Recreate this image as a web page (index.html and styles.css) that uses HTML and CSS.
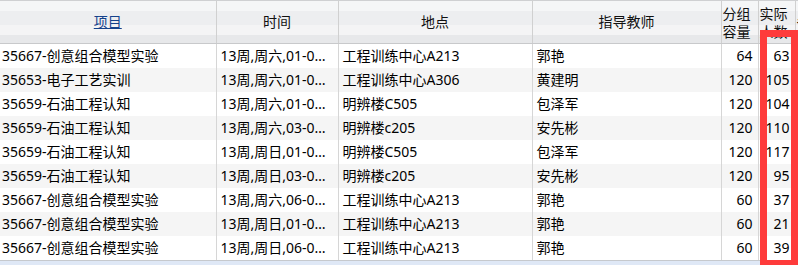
FILE: index.html
```html
<!DOCTYPE html>
<html>
<head>
<meta charset="utf-8">
<link rel="stylesheet" href="styles.css">
</head>
<body>
<div class="grid">
  <table class="tbl">
    <colgroup>
      <col class="c1"><col class="c2"><col class="c3"><col class="c4"><col class="c5"><col class="c6"><col class="c7">
    </colgroup>
    <thead>
      <tr>
        <th><a class="sort">项目</a></th>
        <th>时间</th>
        <th>地点</th>
        <th>指导教师</th>
        <th class="wrap">分组容量</th>
        <th class="wrap">实际人数</th>
        <th class="wrap">备注</th>
      </tr>
    </thead>
    <tbody>
      <tr><td class="first">35667-创意组合模型实验</td><td><div class="ell">13周,周六,01-02节</div></td><td>工程训练中心A213</td><td>郭艳</td><td class="num">64</td><td class="num">63</td><td></td></tr>
      <tr class="alt"><td class="first">35653-电子工艺实训</td><td><div class="ell">13周,周六,01-04节</div></td><td>工程训练中心A306</td><td>黄建明</td><td class="num">120</td><td class="num">105</td><td></td></tr>
      <tr><td class="first">35659-石油工程认知</td><td><div class="ell">13周,周六,01-02节</div></td><td>明辨楼C505</td><td>包泽军</td><td class="num">120</td><td class="num">104</td><td></td></tr>
      <tr class="alt"><td class="first">35659-石油工程认知</td><td><div class="ell">13周,周六,03-04节</div></td><td>明辨楼c205</td><td>安先彬</td><td class="num">120</td><td class="num">110</td><td></td></tr>
      <tr><td class="first">35659-石油工程认知</td><td><div class="ell">13周,周日,01-02节</div></td><td>明辨楼C505</td><td>包泽军</td><td class="num">120</td><td class="num">117</td><td></td></tr>
      <tr class="alt"><td class="first">35659-石油工程认知</td><td><div class="ell">13周,周日,03-04节</div></td><td>明辨楼c205</td><td>安先彬</td><td class="num">120</td><td class="num">95</td><td></td></tr>
      <tr><td class="first">35667-创意组合模型实验</td><td><div class="ell">13周,周六,06-08节</div></td><td>工程训练中心A213</td><td>郭艳</td><td class="num">60</td><td class="num">37</td><td></td></tr>
      <tr class="alt"><td class="first">35667-创意组合模型实验</td><td><div class="ell">13周,周日,01-02节</div></td><td>工程训练中心A213</td><td>郭艳</td><td class="num">60</td><td class="num">21</td><td></td></tr>
      <tr><td class="first">35667-创意组合模型实验</td><td><div class="ell">13周,周日,06-08节</div></td><td>工程训练中心A213</td><td>郭艳</td><td class="num">60</td><td class="num">39</td><td></td></tr>
    </tbody>
  </table>
  <div class="footer"></div>
  <div class="mark"></div>
</div>
</body>
</html>
```

FILE: styles.css
```css
html, body {
  margin: 0;
  padding: 0;
  background: #ffffff;
}
body {
  width: 798px;
  height: 265px;
  overflow: hidden;
  font-family: "Noto Sans", "Noto Sans CJK SC", sans-serif;
  font-size: 14px;
  color: #000;
}
.grid {
  position: relative;
  width: 798px;
  height: 265px;
  overflow: hidden;
  border-top: 1px solid #cfd0d2;
  box-sizing: border-box;
}
.tbl {
  table-layout: fixed;
  border-collapse: collapse;
  width: 830px;
}
.c1 { width: 216px; }
.c2 { width: 122px; }
.c3 { width: 194px; }
.c4 { width: 189px; }
.c5 { width: 37px; }
.c6 { width: 37px; }
.c7 { width: 35px; }

thead th {
  height: 40px;
  padding: 0;
  font-weight: normal;
  text-align: center;
  line-height: 18px;
  color: #111;
  border-left: 1px solid #d0d0d0;
  border-bottom: 1px solid #c8c9cb;
  background: linear-gradient(#f5f6f7 0, #f5f6f7 10px, #edeef0 10px, #edeef0 24px, #f4f4f5 24px, #f4f4f5 34px, #e7e8ea 34px, #e7e8ea 40px);
  white-space: nowrap;
  overflow: hidden;
}
thead th:first-child { border-left: none; }
thead th.wrap {
  white-space: normal;
  word-break: break-all;
  line-height: 18px;
  padding-top: 2px;
  text-align: left;
  padding-left: 1px;
}
.sort {
  color: #15428b;
  text-decoration: underline;
}
tbody td {
  height: 24px;
  padding: 0 4px;
  line-height: 24px;
  white-space: nowrap;
  overflow: hidden;
  border-left: 1px solid #d6d6d6;
}
tbody td:first-child { border-left: none; }
tbody td.first { padding-left: 2px; }
tbody tr.alt td { background: #f5f5f5; }
tbody td.num {
  text-align: right;
  padding-right: 5px;
}
.ell {
  overflow: hidden;
  text-overflow: ellipsis;
  white-space: nowrap;
}
.footer {
  border-top: 1px solid #c6c9cd;
  background: #dfe8f6;
  height: 10px;
}
.mark {
  position: absolute;
  left: 760px;
  top: 29px;
  width: 24px;
  height: 223px;
  border: 7px solid #fe3b3b;
}
```
